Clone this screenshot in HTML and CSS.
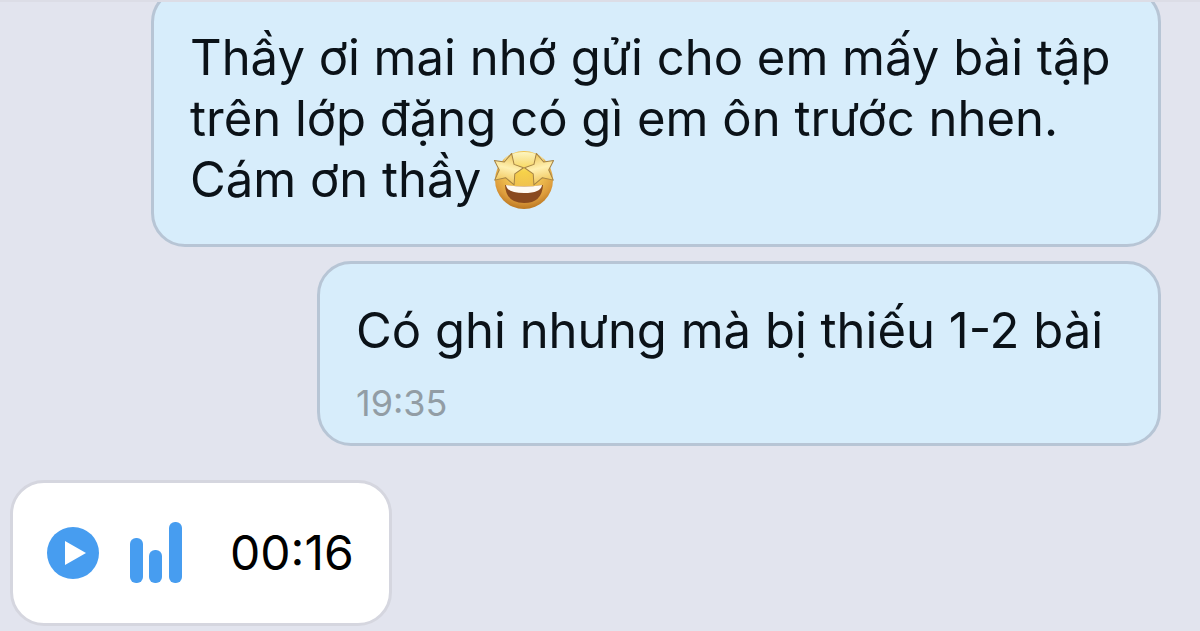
FILE: index.html
```html
<!DOCTYPE html>
<html lang="vi">
	<head>
		<title>Tin nhắn</title>

		<meta charset="utf-8">
		<meta name="viewport" content="width=device-width, initial-scale=1">

		<link rel="stylesheet" href="styles.css">
	</head>
	<body>
		<main class="chat">
			<div class="bubble sent">
				<p class="text">Thầy ơi mai nhớ gửi cho em mấy bài tập trên lớp đặng có gì em ôn trước nhen. <br>Cám ơn thầy<svg class="emoji" viewBox="0 0 62 60" role="img" aria-label="star-struck">
					<defs>
						<radialGradient id="face" cx="50%" cy="30%" r="70%">
							<stop offset="0" stop-color="#f8d648"/>
							<stop offset="0.5" stop-color="#efbf50"/>
							<stop offset="0.8" stop-color="#dd9c3c"/>
							<stop offset="1" stop-color="#bb7722"/>
						</radialGradient>
						<linearGradient id="shine" x1="0" y1="0" x2="0" y2="1">
							<stop offset="0" stop-color="#fdf6c0"/>
							<stop offset="1" stop-color="#fdf6c0" stop-opacity="0"/>
						</linearGradient>
						<linearGradient id="star" x1="0" y1="0" x2="0" y2="1">
							<stop offset="0" stop-color="#edc558"/>
							<stop offset="0.5" stop-color="#fff0b0"/>
							<stop offset="1" stop-color="#f0c559"/>
						</linearGradient>
						<path id="eye" d="M0-15 L5-5 L15-4 L8 4 L10 15 L0 10 L-10 15 L-8 4 L-15-4 L-5-5 Z"/>
					</defs>
					<circle cx="31" cy="30" r="29" fill="url(#face)"/>
					<ellipse cx="31" cy="12" rx="20" ry="10" fill="url(#shine)"/>
					<path d="M12 35 Q31 38 50 35 Q49 53 31 53 Q13 53 12 35 Z" fill="#8a4a1e"/>
					<path d="M13 35 Q31 38 49 35 Q48 43 31 43 Q14 43 13 35 Z" fill="#fffaf2"/>
					<g fill="url(#star)" stroke="#a58345" stroke-width="1" stroke-linejoin="round">
						<use href="#eye" transform="translate(15 18) rotate(14)"/>
						<use href="#eye" transform="translate(47 18) rotate(-14)"/>
					</g>
				</svg></p>
			</div>

			<div class="bubble sent">
				<p class="text">Có ghi nhưng mà bị thiếu 1-2 bài</p>
				<time class="time" datetime="19:35">19:35</time>
			</div>

			<div class="bubble voice">
				<button class="play" type="button" aria-label="Phát">
					<svg viewBox="0 0 52 52" width="52" height="52">
						<circle cx="26" cy="26" r="26" fill="#479df0"/>
						<path d="M18 14 L39 26 L18 38 Z" fill="#fff"/>
					</svg>
				</button>
				<svg class="wave" viewBox="0 0 52 62" width="52" height="62" fill="#479df0">
					<rect x="0" y="16" width="13" height="45" rx="6"/>
					<rect x="19" y="28" width="13" height="33" rx="6"/>
					<rect x="39" y="0" width="13" height="61" rx="6"/>
				</svg>
				<span class="duration">00:16</span>
			</div>
		</main>
	</body>
</html>
```
FILE: styles.css
```css
* {
	box-sizing: border-box;
}

body {
	margin: 0;
	background-color: #e2e4ee;
	color: #0b1218;
	font-family: Inter, "Liberation Sans", sans-serif;
}

/* the newest message stays at the bottom, older ones run off the top */
.chat {
	display: flex;
	flex-direction: column;
	justify-content: flex-end;
	gap: 14px;
	height: 100vh;
	padding: 0 39px 5px 10px;
	border-top: 2px solid #dcdde6;
	overflow: hidden;
}

.bubble {
	flex-shrink: 0;
	border: 3px solid #b7c5d5;
	border-radius: 34px;
}

.sent {
	align-self: flex-end;
	min-width: calc(100% - 307px);
	max-width: calc(100% - 141px);
	padding: 36px 40px 34px 36px;
	background-color: #d7edfb;
}

.text {
	margin: 0;
	font-size: 49px;
	line-height: 61px;
}

.emoji {
	width: 62px;
	height: 60px;
	margin: -4px 0 -4px 12px;
	vertical-align: -9px;
}

.time {
	display: block;
	margin: 22px 0 -14px;
	color: #929da5;
	font-size: 36px;
	line-height: 40px;
}

.voice {
	display: flex;
	align-items: center;
	align-self: flex-start;
	margin-top: 20px;
	padding: 39px 35px 39px 34px;
	border-color: #d5d6df;
	background-color: #fff;
}

.play {
	padding: 0;
	border: none;
	background: none;
	cursor: pointer;
}

.play svg {
	display: block;
}

.wave {
	margin: 0 48px 0 31px;
}

.duration {
	color: #000;
	font-size: 48px;
	line-height: 60px;
}
```
